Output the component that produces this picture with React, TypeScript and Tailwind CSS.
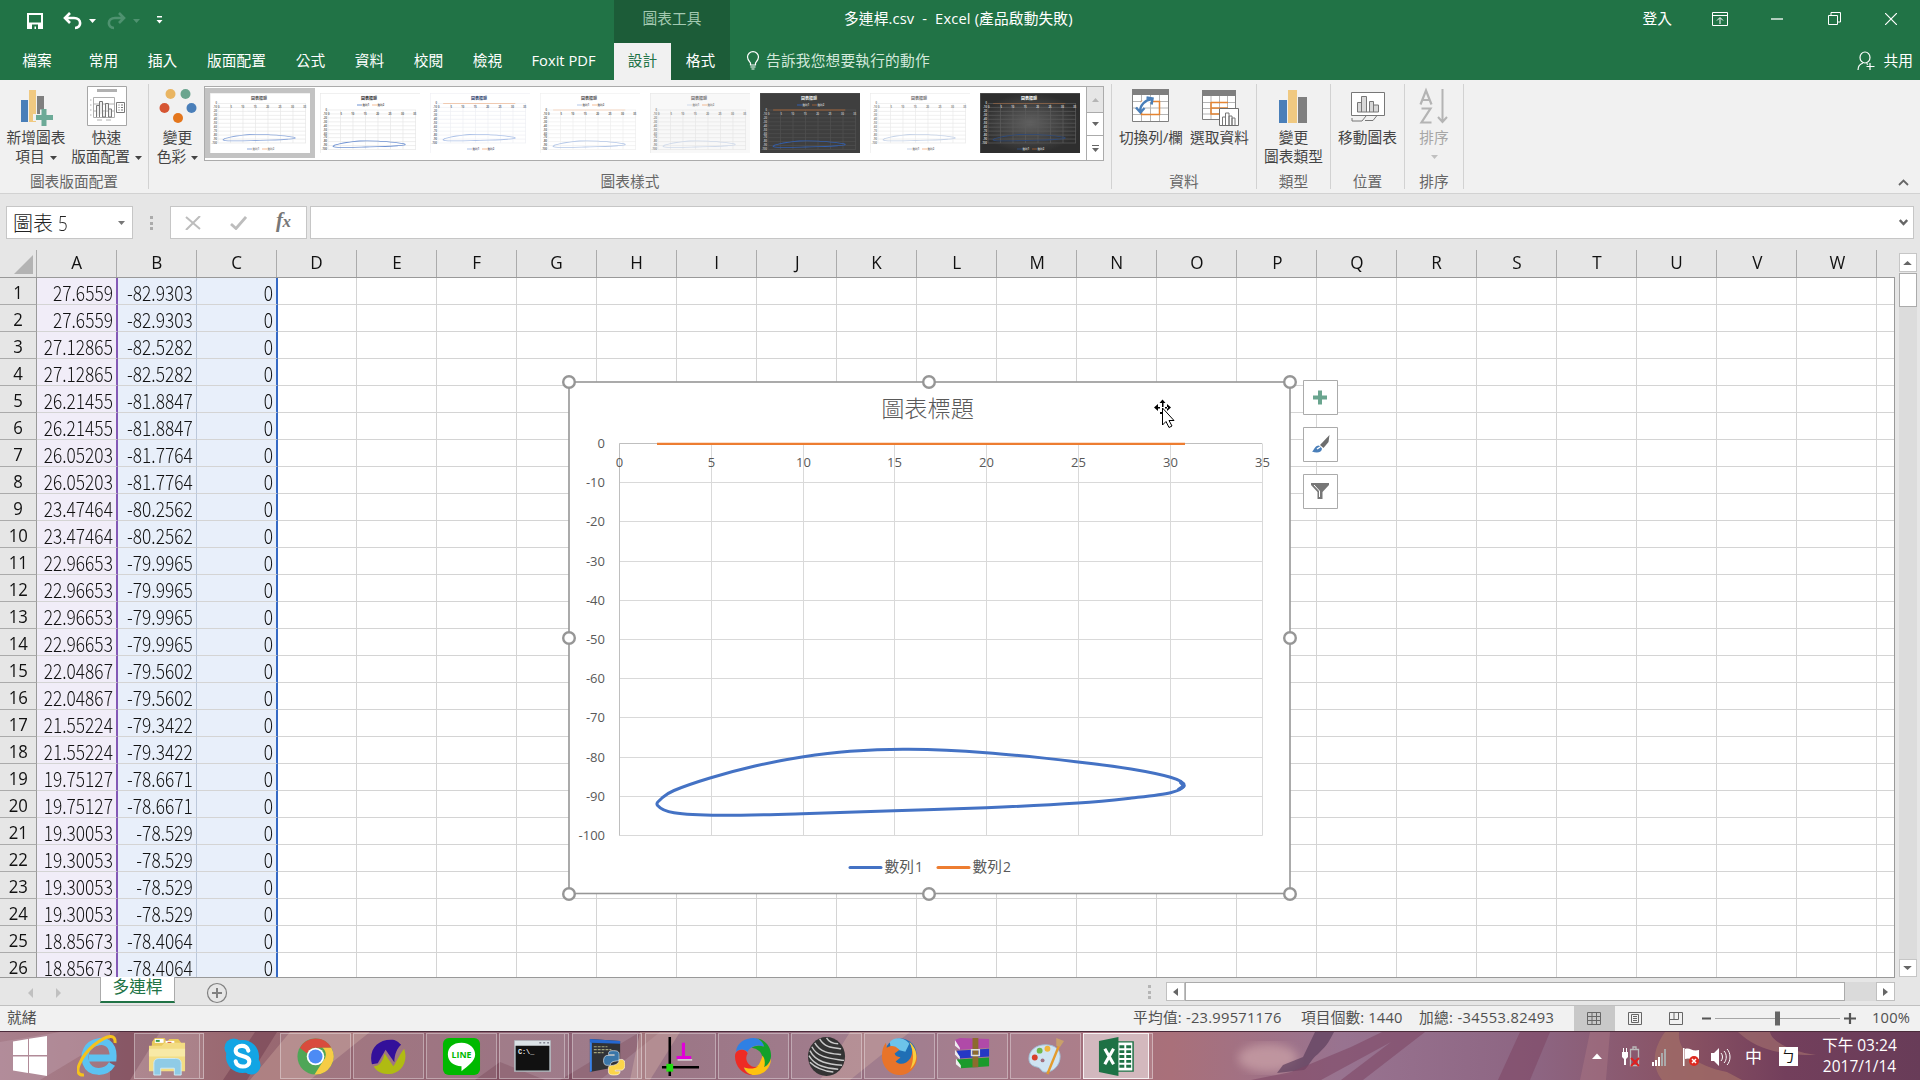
import React from "react";

const colLetters = "ABCDEFGHIJKLMNOPQRSTUVW".split("");

const rows: [string, string][] = [
  ["27.6559", "-82.9303"], ["27.6559", "-82.9303"],
  ["27.12865", "-82.5282"], ["27.12865", "-82.5282"],
  ["26.21455", "-81.8847"], ["26.21455", "-81.8847"],
  ["26.05203", "-81.7764"], ["26.05203", "-81.7764"],
  ["23.47464", "-80.2562"], ["23.47464", "-80.2562"],
  ["22.96653", "-79.9965"], ["22.96653", "-79.9965"],
  ["22.96653", "-79.9965"], ["22.96653", "-79.9965"],
  ["22.04867", "-79.5602"], ["22.04867", "-79.5602"],
  ["21.55224", "-79.3422"], ["21.55224", "-79.3422"],
  ["19.75127", "-78.6671"], ["19.75127", "-78.6671"],
  ["19.30053", "-78.529"], ["19.30053", "-78.529"],
  ["19.30053", "-78.529"], ["19.30053", "-78.529"],
  ["18.85673", "-78.4064"], ["18.85673", "-78.4064"],
];

const loopPoints: [number, number][] = [
  [657.6, 805.5], [661.5, 798.5], [674, 790.5], [710, 778], [755, 766], [802, 757], [850, 751.3], [908.7, 749.3],
  [986, 752.7], [1078, 761.9], [1131, 769], [1170.5, 777.3], [1184, 785], [1170.5, 792.7], [1131.7, 798], [1078, 803],
  [986, 807.7], [894, 810.7], [802, 813.8], [720, 815.3], [674, 812.8],
];

function smoothPath(p: [number, number][]) {
  const n = p.length;
  let d = `M${p[0][0]} ${p[0][1]}`;
  for (let i = 0; i < n; i++) {
    const a = p[(i - 1 + n) % n];
    const b = p[i];
    const c = p[(i + 1) % n];
    const e = p[(i + 2) % n];
    d += `C${b[0] + (c[0] - a[0]) / 6} ${b[1] + (c[1] - a[1]) / 6} ${c[0] - (e[0] - b[0]) / 6} ${c[1] - (e[1] - b[1]) / 6} ${c[0]} ${c[1]}`;
  }
  return d + "Z";
}
const loop = smoothPath(loopPoints);

function Caret({ className = "" }: { className?: string }) {
  return (
    <svg className={className} width="7" height="4" viewBox="0 0 7 4" fill="currentColor">
      <path d="M0 0h7L3.5 4z" />
    </svg>
  );
}

function TitleBar() {
  return (
    <div className="flex h-[43px] text-white">
      <div className="flex w-[614px] pt-[12px]">
        <svg className="ml-[27px] mt-px h-4 w-4" viewBox="0 0 16 16">
          <path d="M1 1h14v14H1z" fill="none" stroke="#fff" strokeWidth="2" />
          <path d="M2 9.500h12v5H2z" fill="#fff" />
          <path d="M5 11.500h6V16H9v-2.500H7.500V16H5z" fill="#217346" />
        </svg>
        <svg className="ml-[19px] h-[18px] w-5" viewBox="0 0 20 18" fill="none" stroke="#fff" strokeWidth="2.600">
          <path d="M8 1 3 6l5 5M3.500 6H12c8 0 8 10 1 10" />
        </svg>
        <Caret className="ml-[7px] mt-[7px]" />
        <svg className="ml-[11px] h-[18px] w-5 text-[#4f9270]" viewBox="0 0 20 18" fill="none" stroke="currentColor" strokeWidth="2.600">
          <path d="M12 1l5 5-5 5M16.500 6H8c-8 0-8 10-1 10" />
        </svg>
        <Caret className="ml-[6px] mt-[7px] text-[#4f9270]" />
        <svg className="ml-[16px] mt-[4px] h-2 w-[7px]" viewBox="0 0 7 8" fill="#fff">
          <path d="M1 0h5v1.500H1zM.5 4h6L3.500 7.500z" />
        </svg>
      </div>
      <div className="flex w-[116px] justify-center bg-[#1c5c38] pt-[7px] text-[14.700px] leading-[22px] text-[#a3c9b1]">圖表工具</div>
      <div className="ml-[114px] w-[232px] whitespace-pre pt-[7px] text-[14.700px] leading-[22px] tracking-[0.150px]">多連桿.csv  -  Excel (產品啟動失敗)</div>
      <div className="flex grow justify-end pt-[8px]">
        <span className="-mt-px mr-[40px] text-[14.700px] leading-[22px]">登入</span>
        <svg className="mr-[43px] mt-[4px] h-[14px] w-4" viewBox="0 0 16 14" fill="none" stroke="#fff">
          <path d="M.5.5h15v13H.5zM.5 3.500h15M8 12V6M5 8.500l3-3 3 3" />
        </svg>
        <svg className="mr-[45px] mt-[10px] h-[2px] w-[12px]"><path d="M0 1h12" stroke="#fff" strokeWidth="1.300" /></svg>
        <svg className="mr-[44px] mt-[4px] h-[14px] w-[13px]" viewBox="0 0 13 14" fill="none" stroke="#fff">
          <path d="M.5 3.500h9v9h-9zM3 3V.5h9.500v9.500H10" />
        </svg>
        <svg className="mr-[23px] mt-[5px] h-[12px] w-[12px]" viewBox="0 0 12 12" stroke="#fff" strokeWidth="1.200">
          <path d="M0 0l12 12M12 0 0 12" />
        </svg>
      </div>
    </div>
  );
}

function Tab({ w, children }: { w: string; children: React.ReactNode }) {
  return <div className={"flex shrink-0 items-center justify-center pb-[2px] " + w}>{children}</div>;
}

function TabBar() {
  return (
    <div className="flex h-[37px] text-[14.700px] text-white">
      <Tab w="w-[74px]">檔案</Tab>
      <Tab w="w-[59px]">常用</Tab>
      <Tab w="w-[59px]">插入</Tab>
      <Tab w="w-[89px]">版面配置</Tab>
      <Tab w="w-[59px]">公式</Tab>
      <Tab w="w-[59px]">資料</Tab>
      <Tab w="w-[59px]">校閱</Tab>
      <Tab w="w-[59px]">檢視</Tab>
      <Tab w="w-[93px]">Foxit PDF</Tab>
      <Tab w="ml-[4px] w-[57px] bg-[#f1f1f1] text-[#217346]">設計</Tab>
      <Tab w="w-[59px] bg-[#1c5c38]">格式</Tab>
      <svg className="ml-[16px] mt-[8px] h-[19px] w-[14px]" viewBox="0 0 14 19" fill="none" stroke="#fff" strokeWidth="1.200">
        <path d="M4.500 14v-2C3 10 1.500 8.500 1.500 6a5.500 5.300 0 0 1 11 0c0 2.500-1.500 4-3 6v2zM4.500 16h5M5.500 18h3" />
      </svg>
      <div className="ml-[6px] flex items-center pb-[2px] tracking-[0.200px] text-[#d3e8db]">告訴我您想要執行的動作</div>
      <div className="flex grow items-center justify-end pb-[2px] pr-[7px]">
        <svg className="mr-[9px] h-[20px] w-[18px]" viewBox="0 0 18 20" fill="none" stroke="#fff" strokeWidth="1.200">
          <ellipse cx="8" cy="6.500" rx="5" ry="5.500" />
          <path d="M1 19c0-4 2-6 5-7M9.500 12.500l1.500 1M13 12v7M9.500 15.500h8" />
        </svg>
        共用
      </div>
    </div>
  );
}

function RibbonButton({ w, icon, lines, caret, off }: { w: string; icon: React.ReactNode; lines: string[]; caret?: boolean; off?: boolean }) {
  return (
    <div className={"flex shrink-0 flex-col items-center whitespace-nowrap text-[14.700px] leading-[19px] " + w + (off ? " text-[#a6a6a6]" : " text-[#444]")}>
      <svg className="mb-[2px] h-[40px] w-[40px]" viewBox="0 0 40 40">{icon}</svg>
      {lines.map((t, i) => (
        <div key={i} className="flex h-[19px] items-center">
          {t}
          {caret && i === lines.length - 1 && <Caret className={t ? "ml-[5px] mt-[2px]" : "text-[#c0c0c0]"} />}
        </div>
      ))}
    </div>
  );
}

function Group({ w, label, children }: { w: string; label: string; children: React.ReactNode }) {
  return (
    <div className={"flex h-[105px] shrink-0 flex-col justify-between border-r border-[#d2d2d2] " + w}>
      <div className="flex pt-[2px]">{children}</div>
      <div className="text-center text-[14.700px] leading-[15px] text-[#666]">{label}</div>
    </div>
  );
}

type Look = { bg: string; title: string; line: string; grid: string; top?: boolean; legend: string; orange: number; text: string; grad?: string };

const looks: Look[] = [
  { bg: "#fff", title: "#555", line: "#8faadc", grid: "#e6e6e6", legend: "#888", orange: 0, text: "#777" },
  { bg: "#fff", title: "#333", line: "#6f92d2", grid: "#e6e6e6", top: true, legend: "#555", orange: 0, text: "#666" },
  { bg: "#fff", title: "#30456e", line: "#adc2e8", grid: "#eeeff4", legend: "#667", orange: 0.35, text: "#666e80" },
  { bg: "#fff", title: "#555", line: "#b4c7e7", grid: "#eee", top: true, legend: "#666", orange: 0.25, text: "#666" },
  { bg: "#f8f8f8", title: "#777", line: "#d0daea", grid: "#e6e6e6", top: true, legend: "#888", orange: 0, text: "#888" },
  { bg: "#3f3f3f", title: "#eee", line: "#335fae", grid: "#505050", top: true, legend: "#ccc", orange: 0.55, text: "#bbb" },
  { bg: "#fff", title: "#777", line: "#c6d3e8", grid: "#e9e9e9", legend: "#777", orange: 0, text: "#888" },
  { bg: "#444", title: "#fff", line: "#2f4a78", grid: "#5b5b5b", legend: "#ccc", orange: 0.3, text: "#ccc", grad: "dark" },
];

function Thumb({ look, index }: { look: Look; index: number }) {
  const y0 = look.top ? 17 : 10.5;
  return (
    <div className={"flex h-[70px] w-[110px] shrink-0 items-center justify-center " + (index === 0 ? "bg-[#c3c3c3]" : "")}>
      <svg width="100" height="60" viewBox="0 0 100 60">
        <defs>
          <radialGradient id="thumbDark"><stop offset="0" stopColor="#606060" /><stop offset="1" stopColor="#2e2e2e" /></radialGradient>
        </defs>
        <rect width="100" height="60" fill={look.grad ? "url(#thumbDark)" : look.bg} />
        <path d="M0 .5h100M.5 0v60" stroke={look.grid} strokeWidth=".6" />
        <text x="41" y="6.500" textLength="16" fontSize="4" fontWeight="700" fill={look.title}>圖表標題</text>
        <g stroke={look.grid} strokeWidth=".7">
          {Array.from({ length: 11 }, (_, i) => <path key={i} d={`M8 ${y0 + i * 3.95}H96`} />)}
          {Array.from({ length: 8 }, (_, i) => <path key={"v" + i} d={`M${8 + i * 12.5} ${y0}v39.500`} />)}
        </g>
        <g fontSize="2.600" fontWeight="700" fill={look.text} textAnchor="end">
          {Array.from({ length: 11 }, (_, i) => <text key={i} x="7" y={y0 + 0.8 + i * 3.95}>{i === 0 ? "0" : -10 * i}</text>)}
          {Array.from({ length: 8 }, (_, i) => <text key={"x" + i} x={9.5 + i * 12.4} y={y0 + 4.8}>{i * 5}</text>)}
        </g>
        <g transform={`translate(${8 - 619.4 * 0.1367} ${y0 - 443.6 * 0.1008}) scale(.1367 .1008)`}>
          <path d={loop} fill="none" stroke={look.line} strokeWidth="8" />
          <path d="M657 443.600H1185" stroke="#ed7d31" strokeWidth="8" opacity={look.orange} />
        </g>
        <g transform={`translate(0 ${look.top ? 12 : 56})`} fontSize="2.600" fontWeight="700" fill={look.legend}>
          <path d="M37 0h5" stroke={look.line} /><text x="42.500" y="1">數列1</text>
          <path d="M52 0h5" stroke="#ed7d31" opacity=".5" /><text x="57.500" y="1">數列2</text>
        </g>
      </svg>
    </div>
  );
}

const barsIcon = (
  <g>
    <path d="M5 14h8v23H5z" fill="#4a7fb9" />
    <path d="M14 4h9v33h-9z" fill="#f0c981" />
    <path d="M24 11h9v26h-9z" fill="#7f7f7f" />
  </g>
);

function Ribbon() {
  return (
    <div className="flex h-[114px] border-b border-[#d2d2d2] bg-[#f1f1f1] pt-[4px]">
      <Group w="w-[149px]" label="圖表版面配置">
        <RibbonButton w="w-[72px]" caret lines={["新增圖表", "項目"]} icon={
          <g>
            <path d="M5 14h7v22H5z" fill="#4a7fb9" /><path d="M13 4h7v32h-7z" fill="#f0c981" /><path d="M21 10h7v19h-7z" fill="#7f7f7f" />
            <path d="M24 23.500h7V28h6.500v7H31v5h-7v-5h-7v-7h7z" fill="#f1f1f1" />
            <path d="M25.500 23h5v6H37v5h-6.500v6h-5v-6H20v-5h5.500z" fill="#6caa97" />
          </g>
        } />
        <RibbonButton w="w-[69px]" caret lines={["快速", "版面配置"]} icon={
          <g fill="none" stroke="#8a8a8a">
            <path d="M.5.500h39v39H.5z" fill="#fff" stroke="#a6a6a6" /><path d="M10 4.500h20" stroke="#b1b1b1" strokeWidth="3" />
            <path d="M6.500 11.500h21v20h-21zM6 18h21M6 25h21M3 14h1.500M3 19h1.500M3 24h1.500M3 29h1.500M10 34h5M19 34h5" stroke="#b0b0b0" />
            <path d="M9.500 31V19.500h3V31V15.500h3V31h3V17.500h3V31h3v-8h-3" fill="#eee" stroke="#777" />
            <path d="M29.500 16.500h8v10h-8z" fill="#fff" stroke="#777" /><path d="M31.500 19h1M34 19h2M31.500 21.500h1M34 21.500h2M31.500 24h1M34 24h2" stroke="#777" />
          </g>
        } />
      </Group>
      <Group w="w-[963px]" label="圖表樣式">
        <RibbonButton w="w-[55px] pl-[2px]" caret lines={["變更", "色彩"]} icon={
          <g>
            <circle cx="12.500" cy="8" r="5" fill="#e9b562" /><circle cx="27.500" cy="8" r="5" fill="#6aa58f" />
            <circle cx="6.500" cy="22" r="5" fill="#d65532" /><circle cx="33.500" cy="22" r="5" fill="#4a7fb9" />
            <circle cx="20" cy="32" r="5" fill="#e4761c" />
          </g>
        } />
        <div className="flex h-[75px] w-[900px] border border-[#ababab] bg-white">
          <div className="flex grow pt-[1px]">
            {looks.map((l, i) => <Thumb key={i} look={l} index={i} />)}
          </div>
          <div className="flex w-[17px] flex-col border-l border-[#ababab]">
            <div className="flex h-[26px] items-center justify-center border-b border-[#ababab] bg-[#e6e6e6] text-[#b5b5b5]"><Caret className="rotate-180" /></div>
            <div className="flex h-[23px] items-center justify-center border-b border-[#ababab] text-[#666]"><Caret /></div>
            <div className="flex grow flex-col items-center justify-center gap-[2px] text-[#666]"><div className="h-px w-[7px] bg-[#666]" /><Caret /></div>
          </div>
        </div>
      </Group>
      <Group w="w-[145px]" label="資料">
        <RibbonButton w="w-[72px] pl-[6px]" lines={["切換列/欄"]} icon={
          <g fill="none">
            <path d="M1.500 3.500h36v32h-36z" fill="#fff" stroke="#7f7f7f" /><path d="M1 3h37v6H1z" fill="#7f7f7f" />
            <path d="M10.500 9v26M19.500 9v26M28.500 9v26M2 15.500h35M2 22h35M2 28.500h35" stroke="#b5b5b5" />
            <path d="M10.500 15.500h18v13h-18z" stroke="#e48432" strokeWidth="1.500" />
            <path d="M9 26c0-7 5-12 12-13" stroke="#fff" strokeWidth="5" />
            <path d="M9 26c0-7 5-12 12-13M15.500 11.500l6 1-1 6M5 21.500l4.500 5 4-4.500" stroke="#4a7fb9" strokeWidth="2.500" />
          </g>
        } />
        <RibbonButton w="w-[71px]" lines={["選取資料"]} icon={
          <g fill="none">
            <path d="M2.500 4.500h33v29h-33z" fill="#fff" stroke="#7f7f7f" /><path d="M2 4h34v6H2z" fill="#7f7f7f" />
            <path d="M11 10v23M19.500 10v23M27.500 10v23M3 16.500h32M3 22.500h32M3 28h32" stroke="#b5b5b5" />
            <path d="M11 16.500h17M11 16v12h8M11 22h17" stroke="#e48432" strokeWidth="1.500" />
            <path d="M19.500 22.500h19v17h-19z" fill="#fff" stroke="#6d6d6d" /><path d="M22.500 39v-8h3v8V27h3.500v12-9h3v9-7h3v7" stroke="#777" />
          </g>
        } />
      </Group>
      <Group w="w-[74px]" label="類型"><RibbonButton w="w-[73px]" lines={["變更", "圖表類型"]} icon={barsIcon} /></Group>
      <Group w="w-[74px]" label="位置">
        <RibbonButton w="w-[73px]" lines={["移動圖表"]} icon={
          <g fill="#fff" stroke="#777">
            <path d="M3.500 6.500h33v23h-33z" /><path d="M9.500 26V16.500h4V26M13.500 26V10.500h5V26M21.500 26V15.500h4V26M25.500 26v-7h5v7h-21" fill="#d8d8d8" />
            <path d="M4 32v3h10l4-5M17 34.500h8l4-5" fill="none" />
          </g>
        } />
      </Group>
      <Group w="w-[59px]" label="排序">
        <RibbonButton w="w-[58px]" off caret lines={["排序", ""]} icon={
          <g fill="none" stroke="#b4b4b4" strokeWidth="2.200">
            <path d="M6.500 18.500 12 4.500l5.500 14M8.500 14h7" /><path d="M7.500 22.500h9l-9 14h10" /><path d="M28.500 3v33M24 31l4.500 5 4.500-5" strokeWidth="2" />
          </g>
        } />
      </Group>
      <div className="flex grow items-end justify-end pb-[7px] pr-[11px]">
        <svg width="11" height="7" viewBox="0 0 11 7" fill="none" stroke="#666" strokeWidth="1.800"><path d="M1 6l4.500-4.500L10 6" /></svg>
      </div>
    </div>
  );
}

function FormulaBar() {
  return (
    <div className="flex h-[56px] bg-[#e6e6e6] pt-[12px]">
      <div className="ml-[6px] flex h-[33px] w-[127px] items-center border border-[#c6c6c6] bg-white pl-[6px] font-light text-[#222]">
        <span className="w-[96px] whitespace-pre pt-[2px] text-[20px] leading-[30px]">圖表 <span className="inline-block origin-left scale-x-[.85]">5</span></span>
        <Caret className="ml-[9px] text-[#777]" />
      </div>
      <div className="ml-[17px] mt-[10px] flex h-[14px] w-[3px] flex-col justify-between">
        {[0, 1, 2].map((i) => <div key={i} className="h-[3px] w-[3px] bg-[#ababab]" />)}
      </div>
      <div className="ml-[17px] flex h-[33px] w-[137px] items-center border border-[#c6c6c6] bg-white">
        <svg className="ml-[14px] h-[14px] w-[16px]" viewBox="0 0 16 14" stroke="#bdbdbd" strokeWidth="2"><path d="M1 1l14 12M15 0 1 14" /></svg>
        <svg className="ml-[29px] h-[14px] w-[17px]" viewBox="0 0 17 14" fill="none" stroke="#bdbdbd" strokeWidth="2.800"><path d="M1 8l5 4.500L16 1" /></svg>
        <span className="-mt-[3px] ml-[29px] font-['Liberation_Serif',serif] text-[21px] font-bold italic leading-[30px] tracking-[-0.500px] text-[#777]">f<span className="text-[17px]">x</span></span>
      </div>
      <div className="ml-[3px] flex h-[33px] w-[1604px] items-center justify-end border border-[#c6c6c6] bg-white pr-[5px]">
        <svg width="9" height="7" viewBox="0 0 9 7" fill="none" stroke="#666" strokeWidth="2.400"><path d="M.8 1l3.700 4L8.200 1" /></svg>
      </div>
    </div>
  );
}

function Chart() {
  const px = (i: number) => Math.round(619 + i * 91.8) + 0.5;
  const py = (i: number) => Math.round(443 + i * 39.2) + 0.5;
  return (
    <svg className="absolute left-[560px] top-[122px]" width="790" height="530" viewBox="560 372 790 530">
      <rect x="569" y="382" width="721" height="511.500" fill="#fff" stroke="#969696" strokeWidth="1.600" />
      <text x="927.500" y="417" textAnchor="middle" fontSize="23.200" fontWeight="300" fill="#595959">圖表標題</text>
      <g stroke="#d9d9d9">
        {Array.from({ length: 10 }, (_, i) => <path key={i} d={`M619.500 ${py(i + 1)}H1262.500`} />)}
        {Array.from({ length: 8 }, (_, i) => <path key={"v" + i} d={`M${px(i)} 443.500V835.500`} />)}
      </g>
      <path d="M619.500 835.500V443.500H1262" fill="none" stroke="#bfbfbf" />
      <g fontSize="13" fill="#595959" fontFamily="'Open Sans'">
        {Array.from({ length: 11 }, (_, i) => <text key={i} x="605" y={py(i) + 4.500} textAnchor="end">{i === 0 ? "0" : -10 * i}</text>)}
        {Array.from({ length: 8 }, (_, i) => <text key={"x" + i} x={px(i)} y="467" textAnchor="middle">{i * 5}</text>)}
      </g>
      <path d="M657 443.800H1185" stroke="#ed7d31" strokeWidth="2.300" />
      <path d={loop} fill="none" stroke="#4472c4" strokeWidth="3" />
      <path d="M1180 781.500l4 4.500-6 4" fill="none" stroke="#4472c4" strokeWidth="3.500" strokeLinejoin="round" />
      <path d="M850 867.500h31" stroke="#4472c4" strokeWidth="3" strokeLinecap="round" />
      <path d="M938 867.500h31" stroke="#ed7d31" strokeWidth="3" strokeLinecap="round" />
      <g fontSize="14.700" fill="#595959">
        <text x="884.500" y="871.500">數列<tspan dx="1" fontSize="14">1</tspan></text>
        <text x="972.500" y="871.500">數列<tspan dx="1" fontSize="14">2</tspan></text>
      </g>
      <g fill="#fff" stroke="#969696" strokeWidth="2.400">
        {[[569, 382], [929, 382], [1290, 382], [569, 638], [1290, 638], [569, 894], [929, 894], [1290, 894]].map(([x, y]) => <circle key={x + "-" + y} cx={x} cy={y} r="5.800" />)}
      </g>
      <g fill="#fff" stroke="#ababab">
        <path d="M1303.500 380.500h34v34h-34zM1303.500 427.500h34v34h-34zM1303.500 474.500h34v34h-34z" />
      </g>
      <path d="M1318 390.500h4v5h5v4h-5v5h-4v-5h-5v-4h5z" fill="#6aa58f" />
      <path d="M1329.500 435l-1 7-5 6-3.500-3z" fill="#6d6d6d" />
      <path d="M1312 451.500c2-1 2.500-6 7-6l3 3c0 4-5 5-10 3z" fill="#4a7fb9" /><path d="M1317 449l3-2" stroke="#fff" strokeWidth="1.500" />
      <path d="M1311 483h18v2l-6.500 7v7h-5v-7l-6.500-7z" fill="#777" /><path d="M1314 485l5.500 6v6" fill="none" stroke="#fff" />
      <g fill="#000">
        <path d="M1162.500 399.500l3 3.500h-6zM1154 407.500l4-3.500v7zM1171 407.500l-4-3.500v7zM1162 403h1.500v4h-1.500zM1157 407h3v1.500h-3zM1165 407h3v1.500h-3zM1160 412h3v2h-3z" />
      </g>
      <path d="M1162.500 408v17l3.500-3.500 3 6 3-1.500-3-5.500h5z" fill="#fff" stroke="#000" strokeWidth="1" />
    </svg>
  );
}

function Cell({ c, text }: { c: number; text: string }) {
  const tone =
    c === 0 ? "w-[81px] border-r-2 border-r-[#8459b5] bg-[#f1edf8] " :
    c === 1 ? "w-[79px] border-r border-r-[#bcc8da] bg-[#e8effa] " :
    c === 2 ? "w-[81px] border-r-2 border-r-[#3569c4] bg-[#e8effa] " :
    c === 3 ? "w-[79px] border-r border-r-[#d4d4d4] " : "w-[80px] border-r border-r-[#d4d4d4] ";
  return (
    <div className={"flex h-[27px] shrink-0 items-center justify-end border-b border-b-[#d4d4d4] pr-[3px] pt-[2px] " + tone}>
      {text && <span className="origin-right scale-x-[.845] font-['Noto_Sans_CJK_TC',sans-serif] text-[20.500px] font-light leading-[24px] text-[#111]">{text}</span>}
    </div>
  );
}

function Sheet() {
  return (
    <div className="relative flex h-[727px] bg-[#e6e6e6]">
      <div className="w-[1895px] overflow-hidden">
        <div className="flex h-[28px] border-b border-[#999]">
          <div className="flex h-[27px] w-[37px] shrink-0 justify-end border-r border-[#ababab] pr-[3px] pt-[5px]">
            <svg width="19" height="19"><path d="M19 0v19H0z" fill="#b3b3b3" /></svg>
          </div>
          {colLetters.map((l) => (
            <div key={l} className="flex h-[27px] w-[80px] shrink-0 items-center justify-center border-r border-[#ababab] pb-[2px] pl-px text-[18px] text-[#111]">
              <span className="scale-x-[.95]">{l}</span>
            </div>
          ))}
        </div>
        <div className="h-[699px] overflow-hidden border-r border-[#999] bg-white">
          {rows.map((r, i) => (
            <div key={i} className="flex h-[27px]">
              <div className="flex w-[37px] shrink-0 items-center justify-center border-b border-r border-b-[#ababab] border-r-[#999] bg-[#e6e6e6] pt-[2px] text-[18px] text-[#111]">
                <span className="scale-x-[.93]">{i + 1}</span>
              </div>
              {colLetters.map((l, c) => <Cell key={l} c={c} text={c === 0 ? r[0] : c === 1 ? r[1] : c === 2 ? "0" : ""} />)}
              <div className="grow border-b border-[#d4d4d4]" />
            </div>
          ))}
        </div>
      </div>
      <div className="flex w-[25px] flex-col items-center pt-[3px]">
        <div className="flex h-[19px] w-[18px] items-center justify-center border border-[#c6c6c6] bg-white text-[#666]"><Caret className="scale-x-125 rotate-180" /></div>
        <div className="mt-[1px] h-[34px] w-[18px] border border-[#ababab] bg-white" />
        <div className="w-[18px] grow bg-[#dcdcdc]" />
        <div className="flex h-[18px] w-[18px] items-center justify-center border border-[#c6c6c6] bg-white text-[#666]"><Caret className="scale-x-125" /></div>
      </div>
      <Chart />
    </div>
  );
}

function SheetTabs() {
  return (
    <div className="flex h-[29px] border-b border-[#c0c0c0] bg-[#e6e6e6]">
      <div className="flex h-full w-[100px] items-center border-t border-[#999] pb-[2px] pt-[4px] text-[#c0c0c0]">
        <svg className="ml-[28px]" width="5" height="10" fill="currentColor"><path d="M5 0v10L0 5z" /></svg>
        <svg className="ml-[23px]" width="5" height="10" fill="currentColor"><path d="M0 0v10l5-5z" /></svg>
      </div>
      <div className="flex h-[26px] w-[75px] justify-center border-b-2 border-l border-r border-b-[#217346] border-l-[#ababab] border-r-[#ababab] bg-white text-[16.700px] leading-[19px] text-[#217346]">多連桿</div>
      <div className="flex grow border-t border-[#999]">
        <svg className="ml-[31px] mt-[4px]" width="22" height="22" fill="none" stroke="#808080">
          <circle cx="11" cy="11" r="9.500" strokeWidth="1.200" /><path d="M6 11h10M11 6v10" strokeWidth="2" />
        </svg>
      </div>
      <div className="flex w-[747px] border-t border-[#999] pt-[4px]">
        <div className="mt-[3px] flex h-[14px] w-[3px] flex-col justify-between">
          {[0, 1, 2].map((i) => <div key={i} className="h-[3px] w-[3px] bg-[#b5b5b5]" />)}
        </div>
        <div className="ml-[15px] flex h-[19px] w-[19px] items-center justify-center border border-[#c0c0c0] bg-white">
          <svg width="5" height="8" fill="#666"><path d="M5 0v8L0 4z" /></svg>
        </div>
        <div className="h-[19px] w-[660px] border border-[#ababab] bg-white" />
        <div className="h-[19px] w-[31px] bg-[#dadada]" />
        <div className="flex h-[19px] w-[19px] items-center justify-center border border-[#c0c0c0] bg-white">
          <svg width="5" height="8" fill="#666"><path d="M0 0v8l5-4z" /></svg>
        </div>
      </div>
      <div className="w-[25px]" />
    </div>
  );
}

function StatusBar() {
  return (
    <div className="flex h-[25px] bg-[#f1f1f1] text-[14.700px] leading-[23px] text-[#505050]">
      <div className="w-[1133px] pl-[7px]">就緒</div>
      <div className="w-[168px] whitespace-nowrap tracking-[0.250px]">平均值: -23.99571176</div>
      <div className="w-[118px] whitespace-nowrap tracking-[0.150px]">項目個數: 1440</div>
      <div className="w-[155px] whitespace-nowrap tracking-[0.350px]">加總: -34553.82493</div>
      <div className="flex w-[41px] items-center justify-center bg-[#c8c8c8] pb-px pr-[2px]">
        <svg width="14" height="13" fill="none" stroke="#666"><path d="M.5.5h13v12H.5zM5 0v12M9.500 0v12M0 4.500h13M0 8.500h13" /></svg>
      </div>
      <div className="flex w-[41px] items-center justify-center pb-px pr-[2px]">
        <svg width="14" height="13" fill="none" stroke="#666"><path d="M.5.5h13v12H.5zM3.500 2.500h7v8h-7zM5 4.500h4M5 6.500h4M5 8.500h4" /></svg>
      </div>
      <div className="flex w-[41px] items-center justify-center pb-px pr-[2px]">
        <svg width="14" height="13" fill="none" stroke="#666"><path d="M.5.5h13v12H.5zM5 0v7.500h4.500V0M0 7.500h5" /></svg>
      </div>
      <svg className="ml-[5px]" width="160" height="25">
        <path d="M0 12.500h9M142 12.500h12M148 7v11" stroke="#555" strokeWidth="2.200" />
        <path d="M13 12.500h125" stroke="#a5a5a5" /><path d="M73 5.500h5v14h-5z" fill="#666" />
      </svg>
      <div className="ml-[10px] tracking-[0.200px]">100%</div>
    </div>
  );
}

const excelIcon = (
  <g>
    <path d="M20 5h17v30H20z" fill="#fff" stroke="#1e7145" strokeWidth="1.500" />
    <path d="M23 10h5M30 10h5M23 15h5M30 15h5M23 20h5M30 20h5M23 25h5M30 25h5M23 30h5M30 30h5" stroke="#1e7145" strokeWidth="3" />
    <path d="M2 4l20-4v40L2 36z" fill="#1e7145" /><path d="M8 12l9 16M17 12 8 28" stroke="#fff" strokeWidth="3.200" />
  </g>
);

const apps: { icon: React.ReactNode; kind: "plain" | "box" | "stack" | "active" }[] = [
  { kind: "stack", icon: <g>
    <path d="M4 5l3-4h10l2 4 3-3h9l3 4v28H4z" fill="#e9c95c" /><path d="M7 2h9v4H7z" fill="#fff" /><path d="M8 3h4v2H8z" fill="#3a9a4a" /><path d="M18 4h9v4h-9z" fill="#fff" /><path d="M20 5h4v2h-4z" fill="#d04a36" />
    <path d="M1 9h13l3-3h21v29H1z" fill="#f3dc83" /><path d="M1 12h37v8H1z" fill="#f8e9a6" />
    <path d="M6 27c0-4 3-5 6-5h16c3 0 6 1 6 5v12h-7v-7H13v7H6z" fill="#8fcbe6" stroke="#cdeaf6" /></g> },
  { kind: "plain", icon: <g>
    <circle cx="20" cy="20" r="17" fill="#12a5e4" /><circle cx="11" cy="11" r="9.500" fill="#12a5e4" /><circle cx="29" cy="29" r="9.500" fill="#12a5e4" />
    <path d="M26 14c-1-7-13-6-13 0 0 7 14 4 14 11 0 7-13 7-14 0" fill="none" stroke="#fff" strokeWidth="4.200" strokeLinecap="round" /></g> },
  { kind: "box", icon: <g>
    <circle cx="20" cy="20" r="18.500" fill="#4fa657" /><path d="M20 1.500a18.500 18.500 0 0 1 16.200 9.500H20a9 9 0 0 0-8.500 6L4 11.200A18.500 18.500 0 0 1 20 1.500z" fill="#d94b3d" />
    <path d="M36.200 11A18.500 18.500 0 0 1 19 38.500l8.500-13.500a9 9 0 0 0-.5-14z" fill="#f6cc45" /><circle cx="20" cy="20" r="9" fill="#fff" /><circle cx="20" cy="20" r="7.200" fill="#4c8bf5" /></g> },
  { kind: "box", icon: <g>
    <path d="M3 28C-1 12 10 1 26 3c3 1 5 3 7 5-4 3-7 10-7 18L17 13 9 27z" fill="#33109a" />
    <path d="M36 12c5 14-4 27-17 26-8 0-13-5-14-8 5 0 9-4 11-13l9 13c3-4 5-10 11-18z" fill="#b0bb12" /></g> },
  { kind: "box", icon: <g>
    <rect x="1" y="1" width="38" height="38" rx="6" fill="#00b900" /><path d="M20 6c9 0 14 6 14 12 0 7-8 12-14 17v-5c-8 0-14-5-14-12S11 6 20 6z" fill="#fff" />
    <text x="20" y="22" textAnchor="middle" fontSize="9" fontWeight="700" fill="#00b900">LINE</text></g> },
  { kind: "stack", icon: <g>
    <path d="M2 4h36v31H2z" fill="#111" stroke="#b9c3c9" strokeWidth="1.500" /><path d="M2 4h36v5H2z" fill="#dbe2e6" /><path d="M27 6h2M31 6h2M35 6h2" stroke="#556" />
    <text x="5" y="17" fontSize="7" fontFamily="Liberation Mono" fontWeight="700" fill="#eee">C:\_</text></g> },
  { kind: "stack", icon: <g>
    <path d="M4 2l31 2v26L4 36z" fill="#303236" /><path d="M4 2l31 2v3L4 6z" fill="#2568d0" /><path d="M4 5v31l2-1V6z" fill="#3983e8" /><path d="M8 10h14M8 13h18M8 16h10" stroke="#a3a57d" strokeWidth="1.200" strokeDasharray="3 1" />
    <g stroke="#fff" strokeWidth=".6">
      <path d="M28 14c6 0 6 2 6 5v4c0 3-9 0-9 6h-4c-4 0-4-9 0-10h8v-1h-6c0-3 1-4 5-4z" fill="#3a76a8" />
      <path d="M29 39c-6 0-6-2-6-5v-3c0-3 11 0 11-8h3c4 0 4 10 0 11h-7v1h5c0 3-2 4-6 4z" fill="#fbd54a" />
    </g></g> },
  { kind: "box", icon: <g>
    <path d="M9 0v40M1 31h38" stroke="#000" strokeWidth="2.600" /><path d="M23 6v16M16 21h15" stroke="#e000d8" strokeWidth="3.200" /><path d="M17 23.500h15" stroke="#ddd" strokeWidth="1.500" /><path d="M5.500 27.500h7v8h-7z" fill="#22dd11" /></g> },
  { kind: "box", icon: <g>
    <path d="M2 15C3 6 11 1 20 1c5 0 10 4 11 9-8-3-14 0-17 5-4-3-8-3-12 0z" fill="#2f80e4" />
    <path d="M22 1c9 1 16 8 16 18 0 4-2 9-7 12-5-1 0-7-2-11-1-5-5-8-11-9 3-2 8-3 13-1-1-4-4-8-9-9z" fill="#12a02a" />
    <path d="M38 22c0 9-7 17-17 17-5 0-9-3-11-8 9 2 15 0 17-6 1-2 2-4 2-6 3 3 3 8 2 12 4-2 6-5 7-9z" fill="#ffc20e" />
    <path d="M19 39C9 39 1 30 1 20c0-3 1-5 3-6 5-2 9 0 10 3-3 5-1 10 4 13 2 1 4 1 7 0-4 3-10 3-15 1 1 4 4 7 9 8z" fill="#ee2b24" /></g> },
  { kind: "box", icon: <g>
    <ellipse cx="20" cy="20" rx="19" ry="20" fill="#333" /><g fill="none" stroke="#c8c8c8" strokeWidth="1.500"><path d="M8 6c6 11 18 11 27 12M5 10c6 12 20 12 33 14M3 14c6 12 19 14 33 15M2 19c6 11 18 13 30 14M3 26c6 6 14 9 24 10M13 2c5 9 13 9 22 10M20 1c3 5 7 6 12 6" /></g></g> },
  { kind: "box", icon: <g>
    <circle cx="21" cy="18" r="16.500" fill="#1f6fb5" /><path d="M10 5c6-6 16-4 20 2l-4 8-8-2-7-2z" fill="#6cc3ea" />
    <path d="M2 20c0-6 1-10 4-14l1 5c3-2 6-2 9-1l4 3-5 4c1 3 3 3 6 4l-5 4c4 4 11 3 15-3 3-5 2-11 0-15 8 7 9 18 3 25-6 8-17 9-24 4C5 32 2 26 2 20z" fill="#e8742a" /><path d="M30 5c9 7 10 20 1 28 4-9 4-19-1-28z" fill="#f9cd3d" /></g> },
  { kind: "box", icon: <g>
    <path d="M2 3l5-2 30 1v9L6 13 2 9z" fill="#b04aa8" /><path d="M4 14l33-2v8L6 22z" fill="#2538c4" /><path d="M4 23l33-2v9L8 32 4 28z" fill="#1a9a2b" /><path d="M2 3l5 8v2l-5-4zM2 13l5 7v3l-5-5zM3 22l5 7v3l-5-4z" fill="#eee" />
    <path d="M20 1h6v30h-6z" fill="#8c6b2f" /><path d="M19 13h8v6h-8z" fill="none" stroke="#ddd" strokeWidth="1.500" /></g> },
  { kind: "box", icon: <g>
    <path d="M20 8c10 0 15 5 15 12 0 9-7 16-15 16-5 0-4-4-8-5-5-1-9-3-9-9C3 14 10 8 20 8z" fill="#cfe4f2" stroke="#9fc0d6" /><circle cx="14" cy="14" r="3" fill="#6fb84c" /><circle cx="22" cy="12" r="3" fill="#f0b53c" /><circle cx="9" cy="21" r="3" fill="#d8402c" /><circle cx="17" cy="24" r="2" fill="#a07080" />
    <path d="M35 6 22 38" stroke="#e39b2d" strokeWidth="2.500" /><path d="M31 1l8 3-4 6-4-1z" fill="#c9a06a" /></g> },
  { kind: "active", icon: excelIcon },
];

function Taskbar() {
  return (
    <div className="relative flex h-[49px] overflow-hidden border-t border-[#4b2b3b] bg-[#9a6f80]">
      <svg className="absolute inset-0" width="1920" height="48" preserveAspectRatio="none">
        <defs>
          <linearGradient id="wall">
            <stop offset="0" stopColor="#a87f8c" /><stop offset=".12" stopColor="#9a6971" /><stop offset=".3" stopColor="#8e6476" /><stop offset=".48" stopColor="#987082" /><stop offset=".61" stopColor="#a9707a" /><stop offset=".7" stopColor="#987390" /><stop offset=".8" stopColor="#8d6582" /><stop offset=".88" stopColor="#885162" /><stop offset=".93" stopColor="#733f5c" /><stop offset="1" stopColor="#683c58" />
          </linearGradient>
          <filter id="soft"><feGaussianBlur stdDeviation="5" /></filter>
        </defs>
        <path d="M0 0h1920v48H0z" fill="url(#wall)" />
        <path d="M0 10 60 0h60L40 48H0z" fill="#bb99a8" opacity=".5" />
        <path d="M110 0h50l-30 48h-20zM255 0h22l-30 48h-24zM500 30l45 18h-70zM640 0h20l-60 48h-40z" fill="#6f3c4e" opacity=".5" />
        <path d="M290 0h80l-60 48h-60zM640 0h40l-30 48h-20zM850 0h60l-60 48h-30z" fill="#c49a94" opacity=".5" />
        <ellipse cx="1268" cy="26" rx="30" ry="14" fill="#c79ea5" opacity=".8" filter="url(#soft)" />
        <path d="M1315 0h19c-6 12-9 15-16 22-8 6-10 14-14 16l-27 3 6-8 20-8z" fill="#5d3e5d" opacity=".7" />
        <path d="M1382 0h43l-62 48h-22l50-38-70 38h-70l40-8 60-25z" fill="#7e4766" opacity=".6" />
        <path d="M1520 0h30l-20 48h-32z" fill="#7e4766" opacity=".6" />
        <path d="M1590 0h20l-4 48h-26z" fill="#a97684" opacity=".5" />
        <path d="M1665 0h14c-2 20 18 34 48 40l15 8h-80c-10-14-10-30 3-48z" fill="#a06c67" opacity=".8" />
        <path d="M1738 0h32c2 10 22 20 46 23-38 0-60-6-78-23z" fill="#9a666a" opacity=".8" />
      </svg>
      <div className="relative flex w-[60px] items-center justify-center">
        <svg width="34" height="40" viewBox="0 0 34 40" preserveAspectRatio="none" fill="#fff"><path d="M0 5.500l15-2.500V19H0zM16 2.800 34 0v19H16zM0 20.500h15V37L0 34.500zM16 20.500h18V40l-18-3z" /></svg>
      </div>
      <div className="relative flex w-[74px] items-center justify-center">
        <svg width="40" height="44" viewBox="0 0 40 44" fill="none">
          <path d="M12 24h24c1-15-9-18-15-16C10 10 6 20 9 29c4 11 20 11 26 1" stroke="#5cc3f2" strokeWidth="7" />
          <path d="M7 41C-6 42 4 22 17 11 30 1 39-1 38 9" stroke="#f5c21d" strokeWidth="3" />
        </svg>
      </div>
      {apps.map((a, i) => (
        <div key={i} className="relative flex w-[73px] shrink-0 pt-px">
          <div className={"flex h-[46px] items-center justify-center " + (a.kind === "plain" ? "w-[70px]" : a.kind === "box" ? "w-[71px] border border-white/35 bg-white/10" : a.kind === "stack" ? "w-[66px] border border-white/35 bg-white/15" : "w-[66px] border border-white/80 bg-white/50")}>
            <svg width="39" height="39" viewBox="0 0 40 40">{a.icon}</svg>
          </div>
          {(a.kind === "stack" || a.kind === "active") && <div className="h-[46px] w-[4px] border-y border-r border-white/40 bg-white/10" />}
        </div>
      ))}
      <div className="relative flex grow justify-end">
        <svg width="225" height="48" viewBox="1585 1032 225 48" fill="#fff">
          <path d="M1592 1059h10l-5-5.500z" />
          <path d="M1623 1048v4h-1v5l2 2v6h2v-6l2-2v-5h-1v-4h-1v4h-2v-4z" />
          <path d="M1630.500 1049.500h8v16h-8zM1633 1049v-2h3v2" fill="none" stroke="#bbb" strokeWidth="1.300" />
          <path d="M1631 1058l8 8M1639 1058l-8 8" stroke="#e02020" strokeWidth="2" />
          <path d="M1652 1062h2v4h-2zM1655 1060h2v6h-2zM1658 1057h2v9h-2z" /><path d="M1661 1053h2v13h-2zM1664 1049h2v17h-2z" fill="#aaa" />
          <path d="M1683 1048h1.500v18h-1.500zM1685 1049c5-2 7 3 14 1v9c-6 2-9-2-14 0z" />
          <circle cx="1694" cy="1061" r="5" fill="#dd2a20" /><path d="M1692 1059l4 4M1696 1059l-4 4" stroke="#fff" strokeWidth="1.500" />
          <path d="M1711 1053h3l5-5v18l-5-5h-3z" /><path d="M1721 1053c2 2 2 6 0 8M1724 1051c3 3 3 9 0 12M1727 1049c4 4 4 12 0 16" fill="none" stroke="#fff" />
          <text x="1745" y="1063" fontSize="17">中</text>
          <path d="M1779 1047h19v19h-19z" /><text x="1781" y="1062" fontSize="14.500" fill="#111">ㄅ</text>
        </svg>
        <div className="w-[110px] pr-[11px] pt-[3px] text-center text-[15.500px] leading-[21px] text-white">
          <div>下午 03:24</div>
          <div>2017/1/14</div>
        </div>
      </div>
    </div>
  );
}

export default function App() {
  return (
    <div className="h-[1080px] w-[1920px] overflow-hidden bg-[#e6e6e6] font-['Open_Sans','Noto_Sans_CJK_TC',sans-serif]">
      <div className="bg-[#217346]">
        <TitleBar />
        <TabBar />
      </div>
      <Ribbon />
      <FormulaBar />
      <Sheet />
      <SheetTabs />
      <StatusBar />
      <Taskbar />
    </div>
  );
}
